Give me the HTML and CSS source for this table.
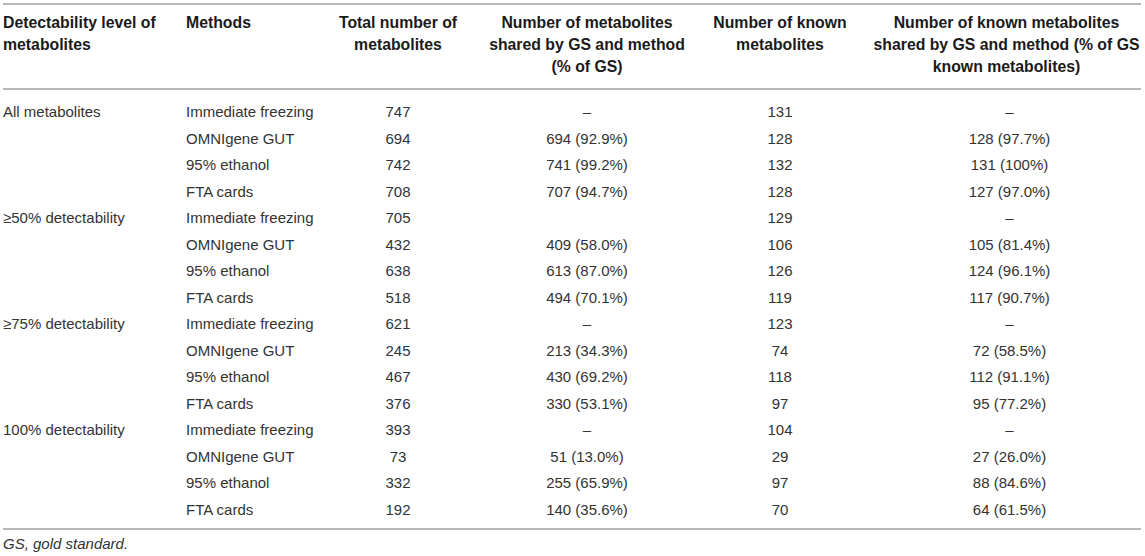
FILE: index.html
```html
<!DOCTYPE html>
<html>
<head>
<meta charset="utf-8">
<link rel="stylesheet" href="styles.css">
</head>
<body>
<div class="wrap">
<table class="tbl">
  <colgroup>
    <col class="c1"><col class="c2"><col class="c3"><col class="c4"><col class="c5"><col class="c6">
  </colgroup>
  <thead>
    <tr>
      <th class="l">Detectability level of<br>metabolites</th>
      <th class="l">Methods</th>
      <th>Total number of<br>metabolites</th>
      <th>Number of metabolites<br>shared by GS and method<br>(% of GS)</th>
      <th>Number of known<br>metabolites</th>
      <th class="last">Number of known metabolites<br>shared by GS and method (% of GS<br>known metabolites)</th>
    </tr>
  </thead>
  <tbody>
    <tr class="first"><td class="l">All metabolites</td><td class="l">Immediate freezing</td><td>747</td><td>–</td><td>131</td><td class="last">–</td></tr>
    <tr><td class="l"></td><td class="l">OMNIgene GUT</td><td>694</td><td>694 (92.9%)</td><td>128</td><td class="last">128 (97.7%)</td></tr>
    <tr><td class="l"></td><td class="l">95% ethanol</td><td>742</td><td>741 (99.2%)</td><td>132</td><td class="last">131 (100%)</td></tr>
    <tr><td class="l"></td><td class="l">FTA cards</td><td>708</td><td>707 (94.7%)</td><td>128</td><td class="last">127 (97.0%)</td></tr>
    <tr><td class="l">≥50% detectability</td><td class="l">Immediate freezing</td><td>705</td><td></td><td>129</td><td class="last">–</td></tr>
    <tr><td class="l"></td><td class="l">OMNIgene GUT</td><td>432</td><td>409 (58.0%)</td><td>106</td><td class="last">105 (81.4%)</td></tr>
    <tr><td class="l"></td><td class="l">95% ethanol</td><td>638</td><td>613 (87.0%)</td><td>126</td><td class="last">124 (96.1%)</td></tr>
    <tr><td class="l"></td><td class="l">FTA cards</td><td>518</td><td>494 (70.1%)</td><td>119</td><td class="last">117 (90.7%)</td></tr>
    <tr><td class="l">≥75% detectability</td><td class="l">Immediate freezing</td><td>621</td><td>–</td><td>123</td><td class="last">–</td></tr>
    <tr><td class="l"></td><td class="l">OMNIgene GUT</td><td>245</td><td>213 (34.3%)</td><td>74</td><td class="last">72 (58.5%)</td></tr>
    <tr><td class="l"></td><td class="l">95% ethanol</td><td>467</td><td>430 (69.2%)</td><td>118</td><td class="last">112 (91.1%)</td></tr>
    <tr><td class="l"></td><td class="l">FTA cards</td><td>376</td><td>330 (53.1%)</td><td>97</td><td class="last">95 (77.2%)</td></tr>
    <tr><td class="l">100% detectability</td><td class="l">Immediate freezing</td><td>393</td><td>–</td><td>104</td><td class="last">–</td></tr>
    <tr><td class="l"></td><td class="l">OMNIgene GUT</td><td>73</td><td>51 (13.0%)</td><td>29</td><td class="last">27 (26.0%)</td></tr>
    <tr><td class="l"></td><td class="l">95% ethanol</td><td>332</td><td>255 (65.9%)</td><td>97</td><td class="last">88 (84.6%)</td></tr>
    <tr class="end"><td class="l"></td><td class="l">FTA cards</td><td>192</td><td>140 (35.6%)</td><td>70</td><td class="last">64 (61.5%)</td></tr>
  </tbody>
</table>
<p class="note">GS, gold standard.</p>
</div>
</body>
</html>
```

FILE: styles.css
```css
html, body {
  margin: 0;
  padding: 0;
  background: #ffffff;
}
.wrap {
  padding: 3px 4px 0 3px;
  font-family: "Liberation Sans", Arial, sans-serif;
  font-size: 15px;
  color: #333333;
}
.tbl {
  width: 1138px;
  border-collapse: collapse;
  table-layout: fixed;
  border-top: 2px solid #b8b8b8;
  border-bottom: 2px solid #b8b8b8;
}
.c1 { width: 183px; }
.c2 { width: 144px; }
.c3 { width: 136px; }
.c4 { width: 242px; }
.c5 { width: 144px; }
.c6 { width: 289px; }
.tbl thead th {
  font-weight: bold;
  font-size: 15.8px;
  color: #1a1a1a;
  line-height: 22px;
  padding: 7px 0 10px 0;
  vertical-align: top;
  text-align: center;
  white-space: nowrap;
  border-bottom: 2px solid #b8b8b8;
}
.tbl th.l, .tbl td.l {
  text-align: left;
}
.tbl th.last {
  padding-left: 20px;
}
.tbl td.last {
  padding-left: 26px;
}
.tbl tbody td {
  height: 26.5px;
  padding: 0;
  line-height: 18px;
  text-align: center;
  vertical-align: middle;
  white-space: nowrap;
}
.tbl tbody tr.first td {
  height: 26.5px;
  padding-top: 9px;
}
.tbl tbody tr.end td {
  padding-bottom: 5px;
}
.note {
  margin: 5px 0 0 0;
  font-style: italic;
  font-size: 15px;
  color: #333333;
}
```
